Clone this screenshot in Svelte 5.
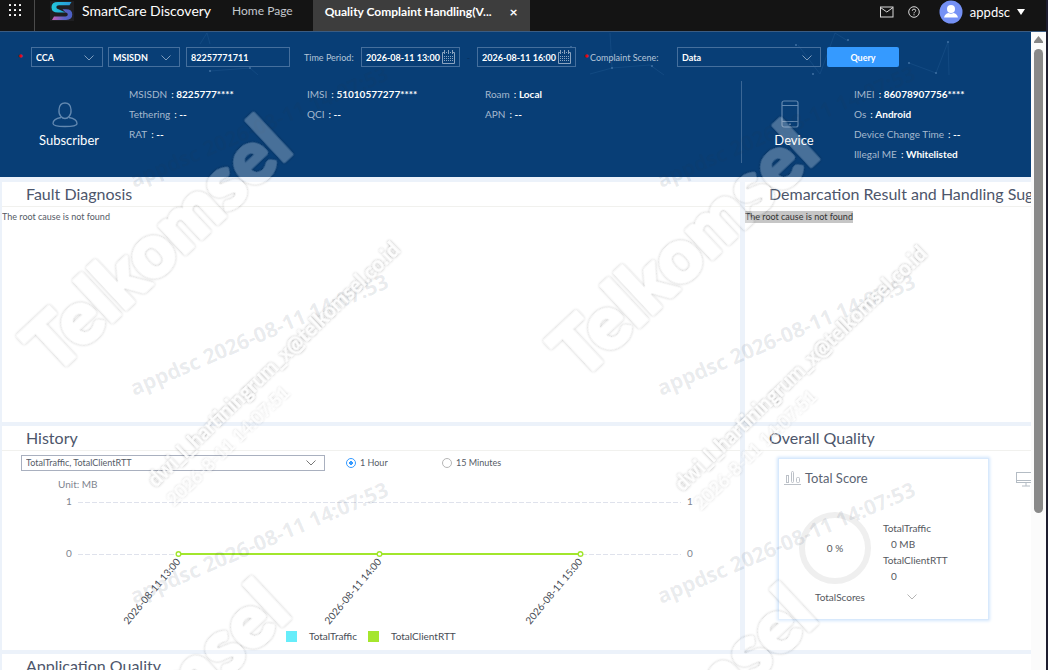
<script>
  const subscriber = [
    ['MSISDN', '8225777****'], ['IMSI', '51010577277****'], ['Roam', 'Local'],
    ['Tethering', '--'], ['QCI', '--'], ['APN', '--'],
    ['RAT', '--']
  ];
  const device = [
    ['IMEI', '86078907756****'], ['Os', 'Android'],
    ['Device Change Time', '--'], ['Illegal ME', 'Whitelisted']
  ];
  const points = [
    { x: 176, t: '2026-08-11 13:00' },
    { x: 377, t: '2026-08-11 14:00' },
    { x: 578, t: '2026-08-11 15:00' }
  ];
  const dates = ['2026-08-11 13:00', '2026-08-11 16:00'];
  const stamps = [
    [134, 188], [134, 396], [134, 604],
    [661, 188], [661, 396], [661, 604]
  ];
  const brands = [[54, 376], [581, 381], [52, 840], [579, 845]];
  const mails = [[156, 488], [683, 492]];
  let range = $state('hour');
</script>

{#snippet chevron(cls)}
  <svg class="chev {cls}" viewBox="0 0 10 6" aria-hidden="true"><path d="M.5.5 5 5 9.5.5" fill="none" stroke="currentColor" /></svg>
{/snippet}

<div class="app">
  <header class="top">
    <button class="grid-btn" aria-label="Applications">
      <svg width="14" height="14" viewBox="0 0 14 14" fill="#fff">
        {#each [1, 6, 11] as y}{#each [1, 6, 11] as x}<rect {x} {y} width="2" height="2" rx=".5" />{/each}{/each}
      </svg>
    </button>
    <svg class="logo" viewBox="0 0 24 20" aria-hidden="true">
      <defs>
        <linearGradient id="lg1" x1="0" x2="1"><stop offset="0" stop-color="#22c8dc" /><stop offset="1" stop-color="#2a95d8" /></linearGradient>
        <linearGradient id="lg2" x1="0" x2="1"><stop offset="0" stop-color="#c662b8" /><stop offset=".6" stop-color="#5a63c6" /><stop offset="1" stop-color="#4a5fc4" /></linearGradient>
      </defs>
      <rect width="24" height="20" fill="#1f1f22" />
      <path d="M12.500 8.200H16Q22.300 8.200 22.300 13.600T16 19H2L4 15.600H15.500Q17.800 15.600 17.800 13.600T15.500 11.600Z" fill="url(#lg2)" />
      <path d="M21.500 1 19.500 4.300H9Q6.300 4.300 6.300 6T8.500 8.200L15.500 11.600H8Q1.500 11.600 1.500 6.300T8 1Z" fill="url(#lg1)" />
    </svg>
    <span class="product">SmartCare Discovery</span>
    <a class="home" href="#home">Home Page</a>
    <div class="tab"><span>Quality Complaint Handling(V...</span><button aria-label="Close tab">×</button></div>
    <div class="tools">
      <svg width="14" height="12" viewBox="0 0 14 12" fill="none" stroke="#d8d8d8"><rect x=".5" y="1" width="12.500" height="10" /><path d="m.5 1.500 6.300 4.500L13 1.500" /></svg>
      <svg width="12" height="12" viewBox="0 0 12 12" fill="none" stroke="#d8d8d8"><circle cx="6" cy="6" r="5.300" /><path d="M4.300 4.800Q4.300 3.100 6 3.100T7.700 4.700Q7.700 5.500 6.700 6.100 6 6.500 6 7.400M6 8.200v1.100" /></svg>
      <svg class="avatar" width="24" height="24" viewBox="0 0 24 24"><circle cx="12" cy="12" r="11.500" fill="#7591f5" /><circle cx="12" cy="9" r="4" fill="#fff" /><path d="M5 17.500Q6 13.500 9.500 13q2.500 1.400 5 0Q18 13.500 19 17.500Z" fill="#fff" /></svg>
      <button class="user">appdsc<svg width="8" height="6" viewBox="0 0 8 6"><path d="M0 0h8L4 6Z" fill="#fff" /></svg></button>
    </div>
  </header>

  <div class="view">
    <main>
      <section class="query">
        <svg class="net" viewBox="0 0 1031 50" aria-hidden="true" preserveAspectRatio="xMinYMin slice">
          <g fill="none" stroke="#2b639b" stroke-opacity=".3"><path d="M200 12 207 1 210 12M210 39 250 36 258 43M610 1 612 36 650 33 664 43M612 36 590 42M798 13 820 42 835 1 848 9M909 31 936 41 948 10 949 43" /></g>
          <g fill="#3f70a3"><circle cx="210" cy="39" r="1" /><circle cx="250" cy="36" r="1" /><circle cx="571" cy="15" r="1" /><circle cx="612" cy="36" r="1" /><circle cx="652" cy="34" r="1" /><circle cx="796" cy="13" r="1" /><circle cx="813" cy="42" r="1" /><circle cx="848" cy="8" r="1" /><circle cx="909" cy="31" r="1" /><circle cx="936" cy="41" r="1" /><circle cx="948" cy="10" r="1" /></g>
        </svg>
        <form class="filters" onsubmit={(e) => e.preventDefault()}>
          <span class="req">*</span>
          <div class="pick sm"><select aria-label="Type"><option>CCA</option></select>{@render chevron('')}</div>
          <div class="pick sm"><select aria-label="Identifier"><option>MSISDN</option></select>{@render chevron('')}</div>
          <input class="num" aria-label="Number" value="82257771711" />
          <label class="lab time" for="from">Time Period:</label>
          {#each dates as d, i}
            {#if i}<span class="dash">-</span>{/if}
            <div class="date">
              <input id={i ? 'to' : 'from'} aria-label={i ? 'End time' : 'Start time'} value={d} />
              <svg width="13" height="14" viewBox="0 0 13 14" fill="none" stroke="#8ba4c0"><path d="M2 2.500H.5v11h12v-11H11M4 2.500h1M8 2.500h1M2.500 0v4M6.500 0v4M10.500 0v4" /><path d="M2 6.500h9M2 8.500h9M2 10.500h9" stroke-dasharray="1 1" /></svg>
            </div>
          {/each}
          <span class="req scene-req">*</span>
          <label class="lab" for="scene">Complaint Scene:</label>
          <div class="pick scene"><select id="scene"><option>Data</option></select>{@render chevron('')}</div>
          <button class="go">Query</button>
        </form>
        <div class="info">
          <div class="who">
            <svg width="26" height="26" viewBox="0 0 26 26" fill="none" stroke="#6288b0" stroke-width="1.300"><path d="M9 14.500Q6.500 12 7 7.500 7.500 1 13 1T19 7.500Q19.500 12 17 14.500 15.500 16.500 13 16.500T9 14.500Z" /><path d="M9 15.500Q1 17 1 21.500 1 24.500 13 24.500T25 21.500Q25 17 17 15.500" /></svg>
            <strong>Subscriber</strong>
          </div>
          <dl class="sub">
            {#each subscriber as [k, v]}<div><dt>{k}</dt><dd>: <b>{v}</b></dd></div>{/each}
          </dl>
          <div class="who dev">
            <svg width="18" height="28" viewBox="0 0 18 28" fill="none" stroke="#6288b0" stroke-width="1.200"><rect x="1" y="1" width="16" height="26" rx="2" /><path d="M1 5.500h16M1 21.500h16" /><path d="M8 24.300h2" stroke-width="1.500" /></svg>
            <strong>Device</strong>
          </div>
          <dl class="devlist">
            {#each device as [k, v]}<div><dt>{k}</dt><dd>: <b>{v}</b></dd></div>{/each}
          </dl>
        </div>
      </section>

      <div class="board">
        <section class="panel tall"><h2>Fault Diagnosis</h2><p>The root cause is not found</p></section>
        <section class="panel tall"><h2>Demarcation Result and Handling Suggestions</h2><p><mark>The root cause is not found</mark></p></section>
        <section class="panel">
          <h2>History</h2>
          <div class="controls">
            <div class="pick light"><select aria-label="Metrics"><option>TotalTraffic, TotalClientRTT</option></select>{@render chevron('')}</div>
            <label class="radio"><input type="radio" name="range" value="hour" bind:group={range} />1 Hour</label>
            <label class="radio"><input type="radio" name="range" value="quarter" bind:group={range} />15 Minutes</label>
          </div>
          <svg class="chart" viewBox="0 0 738 178">
            <text x="56" y="18" class="unit">Unit: MB</text>
            <g class="tick"><text x="64" y="35">1</text><text x="64" y="87">0</text><text x="685" y="35">1</text><text x="685" y="87">0</text></g>
            <path d="M76 32.500H679M76 84.500H679" stroke="#dfe2ec" stroke-dasharray="5 2" />
            <path d="M176 84H578" stroke="#a2e62c" stroke-width="2" />
            {#each points as p}
              <circle cx={p.x + 0.5} cy="84" r="2.300" fill="#fff" stroke="#a2e62c" stroke-width="1.400" />
              <text class="when" text-anchor="end" transform="translate({p.x + 3} 92) rotate(-50)">{p.t}</text>
            {/each}
            <rect x="284" y="161" width="11" height="11" fill="#66edfa" /><text class="key" x="307" y="170">TotalTraffic</text>
            <rect x="366" y="161" width="11" height="11" fill="#a5e62d" /><text class="key" x="389" y="170">TotalClientRTT</text>
          </svg>
        </section>
        <section class="panel">
          <h2>Overall Quality</h2>
          <div class="cards">
            <article class="card">
              <h3><svg width="17" height="14" viewBox="0 0 17 14" fill="none" stroke="#bcc1c8"><path d="M0 13.500h17" /><rect x="2.500" y="4.500" width="2" height="7" /><rect x="7.500" y=".5" width="2" height="11" rx="1" /><rect x="12.500" y="6.500" width="3" height="5" rx="1" /></svg>Total Score</h3>
              <div class="score">
                <div class="ring">0 %</div>
                <ul><li>TotalTraffic</li><li class="val">0 MB</li><li>TotalClientRTT</li><li class="val">0</li></ul>
              </div>
              <button class="more">TotalScores{@render chevron('wide')}</button>
            </article>
            <svg class="monitor" width="20" height="15" viewBox="0 0 20 15" fill="none" stroke="#b4bcc4"><rect x=".5" y=".5" width="19" height="10" /><path d="M1 8.500h18M10 11v3M6 14h8" /></svg>
          </div>
        </section>
        <section class="panel last"><h2>Application Quality</h2></section>
      </div>
    </main>
    <div class="scroll" aria-hidden="true"><svg width="9" height="7" viewBox="0 0 9 7"><path d="M4.500 0 9 5.500V7H0V5.500Z" fill="#868686" /></svg><i></i></div>
  </div>

  <svg class="marks" aria-hidden="true">
    <defs>
      <filter id="emboss" x="-10%" y="-40%" width="120%" height="180%">
        <feGaussianBlur in="SourceAlpha" stdDeviation="1.800" result="b" />
        <feComponentTransfer in="b" result="s"><feFuncA type="linear" slope=".32" /></feComponentTransfer>
        <feComposite in="s" in2="SourceAlpha" operator="out" result="halo" />
        <feComponentTransfer in="SourceGraphic" result="f"><feFuncA type="linear" slope=".26" /></feComponentTransfer>
        <feMerge><feMergeNode in="halo" /><feMergeNode in="f" /></feMerge>
      </filter>
      <filter id="glow" x="-10%" y="-60%" width="120%" height="220%">
        <feGaussianBlur in="SourceAlpha" stdDeviation="1.500" result="b" />
        <feComponentTransfer in="b" result="s"><feFuncA type="linear" slope=".4" /></feComponentTransfer>
        <feMerge><feMergeNode in="s" /><feMergeNode in="SourceGraphic" /></feMerge>
      </filter>
    </defs>
    {#each stamps as [x, y]}<text class="stamp" transform="translate({x} {y}) rotate(-23)">appdsc 2026-08-11 14:07:53</text>{/each}
    {#each brands as [x, y]}<text class="brand" filter="url(#emboss)" transform="translate({x} {y}) rotate(-43)">Telkomsel</text>{/each}
    {#each mails as [x, y]}
      <g transform="translate({x} {y}) rotate(-44)">
        <text class="mail" filter="url(#glow)">dwi_l_hartiningrum_x@telkomsel.co.id</text>
        <text class="mail thin" filter="url(#glow)" y="26">2026-8-11 14:07:51</text>
      </g>
    {/each}
  </svg>
</div>

<style>
  :global(body) { margin: 0; overflow: hidden; }
  .app { position: relative; height: 100vh; display: flex; flex-direction: column; overflow: hidden; font-family: Lato, "Open Sans", sans-serif; font-size: 9px; color: #555b66; background: #fff; border-right: 2px solid #1d1d2e; box-sizing: border-box; }
  button, input, select { font: inherit; color: inherit; margin: 0; box-sizing: border-box; }
  button { background: none; border: 0; padding: 0; cursor: pointer; }
  .top { flex: none; height: 32px; box-sizing: border-box; background: #141414; border-bottom: 1px solid #3b5c82; display: flex; align-items: center; color: #fff; }
  .top > * { padding-bottom: 10px; box-sizing: border-box; }
  .grid-btn { width: 35px; height: 31px; border-right: 1px solid #4b4b4b; padding-top: 1px; padding-right: 4px; }
  .top > .logo { width: 24px; height: 20px; margin: 0 8px 9px 15px; padding: 0; }
  .product { font-size: 14px; }
  .home { font-size: 12px; color: #c4c8ce; text-decoration: none; margin: 0 20px 0 21px; }
  .tab { display: flex; align-items: center; justify-content: space-between; width: 217px; height: 31px; padding: 0 11px 9px 12px; background: #3d3d3d; font-size: 12px; font-weight: 700; }
  .tab button { font-size: 14px; width: 10px; }
  .tools { display: flex; align-items: center; margin-left: auto; gap: 14px; padding: 0 21px 7px 0; }
  .tools .avatar { margin: 0 -7px 0 5px; }
  .user { display: flex; align-items: center; gap: 7px; font-size: 13px; }
  .view { flex: 1; display: flex; min-height: 0; }
  main { flex: 1; min-width: 0; overflow: hidden; background: #ecf2fa; }
  .scroll { width: 15px; background: #fbfbfb; display: flex; flex-direction: column; align-items: center; gap: 6px; padding-top: 4px; }
  .scroll i { width: 9px; height: 464px; border-radius: 5px; background: #898989; }
  .query { position: relative; height: 145px; box-sizing: border-box; padding-top: 15px; background: #083e76; color: #fff; }
  .net { position: absolute; left: 0; top: 0; width: 100%; height: 50px; }
  .filters { position: relative; display: flex; align-items: center; padding-left: 18px; max-width: 899px; box-sizing: border-box; }
  .req { color: #f00; font-size: 12px; font-weight: 900; width: 13px; line-height: 20px; height: 16px; }
  .scene-req { width: 6px; margin-left: 8px; }
  .pick { position: relative; height: 20px; }
  .pick select { appearance: none; width: 100%; height: 100%; border: 1px solid #456f9d; border-radius: 0; background: transparent; padding: 0 4px; font-weight: 700; }
  .pick option { color: #333; }
  .chev { position: absolute; right: 9px; top: 8px; width: 10px; height: 6px; color: #7f9dbd; pointer-events: none; }
  .sm { width: 72px; margin-right: 5px; }
  .num, .date { height: 20px; border: 1px solid #456f9d; box-sizing: border-box; background: transparent; font-weight: 700; }
  .num { width: 104px; margin-left: 1px; padding: 0 4px; }
  .lab { color: #b4c5d8; white-space: nowrap; }
  .time { width: 57px; margin-left: 14px; }
  .date { width: 99px; display: flex; align-items: center; padding: 0 4px; }
  .date input { flex: 1; min-width: 0; border: 0; background: none; padding: 0; font-weight: 700; }
  .dash { width: 17px; text-align: center; color: #07305e; }
  .scene { width: 144px; margin-left: auto; }
  .go { width: 72px; height: 20px; margin-left: 6px; border-radius: 2px; background: #359aff; font-weight: 700; }
  .info { position: relative; display: flex; margin-top: 14px; padding-left: 28px; font-size: 10px; }
  .who { width: 82px; display: flex; flex-direction: column; align-items: center; padding-top: 21px; box-sizing: border-box; height: 82px; }
  .who svg { margin-right: 8px; }
  .who strong { font-size: 13px; line-height: 16px; font-weight: 400; margin-top: 4px; }
  dl { margin: 0; }
  dl div { display: flex; line-height: 20px; gap: 4px; white-space: nowrap; }
  dt { color: #a5b9cf; }
  dd { margin: 0; }
  .sub { flex: 1; display: grid; grid-template-columns: 178px 178px 1fr; align-content: start; margin-left: 19px; padding-top: 3px; }
  .dev { border-left: 1px solid #3b6796; width: 113px; padding: 19px 8px 0 0; }
  .devlist { width: 177px; padding-top: 3px; }
  .board { display: grid; grid-template-columns: 738fr 286fr; column-gap: 5px; row-gap: 4px; padding: 5px 0 0 2px; }
  .panel { min-width: 0; background: #fff; overflow: hidden; min-height: 224px; box-sizing: border-box; }
  .tall { min-height: 240px; }
  .last { grid-column: 1 / -1; }
  h2 { margin: 0; padding-left: 24px; height: 25px; line-height: 23px; border-bottom: 1px solid #f1f1ee; box-sizing: border-box; font-size: 16px; font-weight: 400; white-space: nowrap; color: #4d566b; }
  p { margin: 0; padding-top: 4px; line-height: 12px; }
  mark { display: inline-block; background: #c6c6c6; color: #333; }
  .controls { display: flex; align-items: center; height: 15px; padding: 4px 0 0 19px; }
  .light { width: 304px; height: 16px; margin-right: 21px; }
  .light select { border-color: #a9b0bf; font-weight: 400; }
  .light .chev { top: 5px; color: #777; }
  .radio { display: flex; align-items: center; gap: 4px; width: 96px; }
  .radio input { appearance: none; width: 10px; height: 10px; border: 1px solid #b6b6b6; border-radius: 50%; }
  .radio input:checked { border-color: #359aff; background: radial-gradient(circle, #359aff 0 2px, #fff 2px); }
  .chart { display: block; width: 100%; }
  .chart text { font-size: 10px; fill: #474c55; }
  .chart .unit, .chart .tick text { fill: #80858f; }
  .cards { display: flex; align-items: flex-start; gap: 27px; padding: 7px 0 0 33px; }
  .card { flex: none; width: 211px; height: 162px; box-sizing: border-box; border: 1px solid #d8e9fc; box-shadow: 0 0 3px 1px #d3e6fc; padding: 10px 5px 0; color: #55585e; }
  h3 { margin: 0; display: flex; align-items: center; gap: 4px; font-size: 13px; line-height: 18px; font-weight: 400; color: #5c6472; }
  .score { display: flex; align-items: center; gap: 12px; padding: 25px 0 0 15px; }
  .ring { width: 72px; height: 72px; box-sizing: border-box; border: 6px solid #efefef; border-radius: 50%; display: grid; place-items: center; font-size: 10px; }
  ul { list-style: none; margin: 0; padding: 8px 0 0; font-size: 10px; line-height: 16px; }
  .val { padding-left: 8px; }
  .more { display: flex; align-items: center; justify-content: space-between; width: 103px; margin: 7px 0 0 31px; font-size: 10px; }
  .wide { position: static; width: 12px; color: #b5b5b5; }
  .monitor { flex: none; margin-top: 14px; }
  .marks { position: absolute; left: 0; top: 0; width: 100%; height: 100%; pointer-events: none; }
  .stamp { font: 700 21px "Open Sans", sans-serif; fill: #1f3550; fill-opacity: .1; }
  .brand { font: 900 74px Lato, sans-serif; fill: #fff; stroke: #fff; stroke-width: 3; stroke-linejoin: round; }
  .mail { font: 700 20px Lato, sans-serif; fill: #fff; fill-opacity: .95; }
  .thin { font-weight: 400; font-size: 18px; opacity: .6; }
</style>
